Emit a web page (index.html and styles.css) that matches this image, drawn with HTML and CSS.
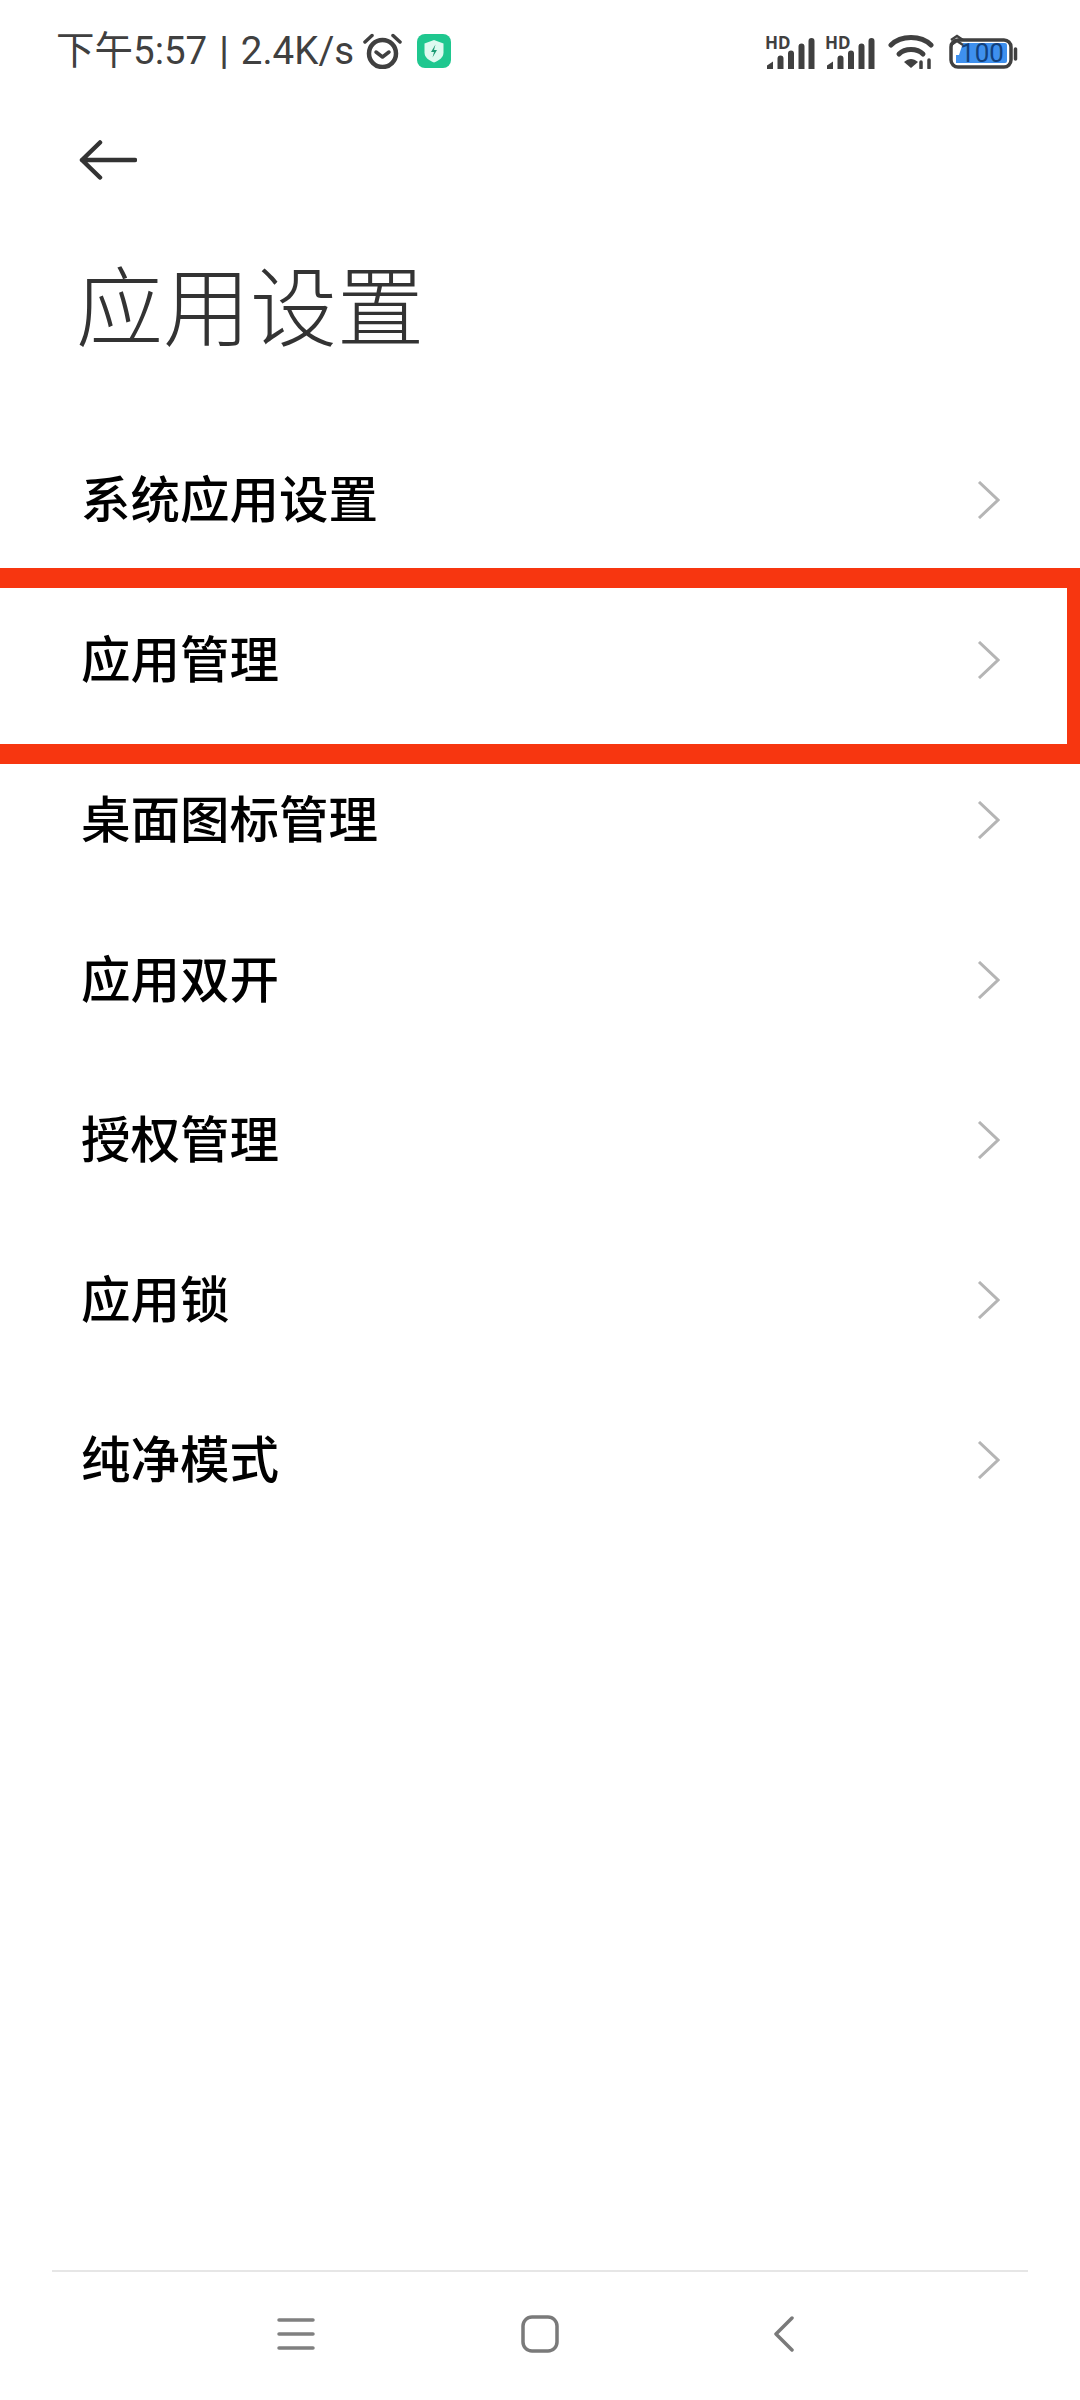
FILE: index.html
```html
<!DOCTYPE html>
<html lang="zh-CN">

<head>
    <meta charset="UTF-8">
    <meta name="viewport" content="width=device-width, initial-scale=1.0">
    <title>应用设置</title>
    <link rel="stylesheet" href="styles.css">
</head>

<body>
    <div class="page">
        <!-- Status bar -->
        <div class="statusbar">
            <span class="status-text">下午5:57<span class="status-sep">|</span>2.4K/s</span>
            <svg class="alarm" width="39" height="36" viewBox="0 0 39 36" fill="none" stroke="#404040">
                <circle cx="19.5" cy="20.5" r="13.5" stroke-width="4.500" />
                <path d="M13 19l6.500 5 6.500-5" stroke-width="3.500" stroke-linecap="round" stroke-linejoin="round" />
                <path d="M2 9l7-6.500M37 9l-7-6.500" stroke-width="3.500" stroke-linecap="round" />
            </svg>
            <svg class="shield" width="34" height="34" viewBox="0 0 34 34">
                <rect width="34" height="34" rx="8" fill="#1fc78f" />
                <path d="M17 6l9.500 3.500v9c0 5-4.500 8-9.500 10-5-2-9.500-5-9.500-10v-9z" fill="#dffaf0" />
                <path d="M18.500 10.500l-4.500 7.500h3l-1.500 5.500 4.500-7.500h-3z" fill="#1f9c75" />
            </svg>

            <div class="status-right">
                <svg class="signal" width="50" height="38" viewBox="0 0 50 38">
                    <text x="0" y="17" class="hd">HD</text>
                    <path d="M2 37v-3.500l6-4v7.500zM12.500 37v-10.500q0-3 3-3t3 3v10.500zM23 37v-15.500q0-3 3-3t3 3v15.500zM33.500 37v-22.500q0-3 3-3t3 3v22.500zM43.500 37v-28q0-3 3-3t3 3v28z" fill="#404040" />
                </svg>
                <svg class="signal" width="50" height="38" viewBox="0 0 50 38">
                    <text x="0" y="17" class="hd">HD</text>
                    <path d="M2 37v-3.500l6-4v7.500zM12.500 37v-10.500q0-3 3-3t3 3v10.500zM23 37v-15.500q0-3 3-3t3 3v15.500zM33.500 37v-22.500q0-3 3-3t3 3v22.500zM43.500 37v-28q0-3 3-3t3 3v28z" fill="#404040" />
                </svg>
                <svg class="wifi" width="46" height="36" viewBox="0 0 46 36" fill="none" stroke="#404040" stroke-width="5" stroke-linecap="round">
                    <path d="M3 12C13 2 33 2 43 12" />
                    <path d="M11 21C17 15 29 15 35 21" />
                    <path d="M16 29l7 6 7-6C25 25 21 25 16 29z" fill="#404040" stroke="none" />
                    <path d="M33 35v-6M41 35v-8" stroke-width="3.500" />
                </svg>
                <svg class="battery" width="69" height="36" viewBox="0 0 69 36">
                    <rect x="2" y="7" width="60" height="27" rx="7" fill="#fff" stroke="#404040" stroke-width="3.500" />
                    <path d="M7 22h3l4-12h42a2 2 0 0 1 2 2v16a2 2 0 0 1-2 2H7z" fill="#3e90ee" />
                    <path d="M2 7l6-4 6 4M2 12l6-4 6 4" fill="none" stroke="#404040" stroke-width="2.500" />
                    <path d="M66.500 16v10" stroke="#404040" stroke-width="3.500" stroke-linecap="round" />
                    <text x="33" y="29" text-anchor="middle" class="level">100</text>
                </svg>
            </div>
        </div>

        <!-- Header -->
        <div class="back-row">
            <svg width="58" height="40" viewBox="0 0 58 40" fill="none" stroke="#333" stroke-width="4.500" stroke-linecap="round" stroke-linejoin="round">
                <path d="M3 20h53M21 2.500L3 20l18 17.500" />
            </svg>
        </div>
        <h1 class="title">应用设置</h1>

        <!-- Settings list -->
        <div class="list">
            <div class="item">
                <span class="item-label">系统应用设置</span>
                <svg class="chevron" width="23" height="38" viewBox="0 0 23 38"><path d="M2 1l19 18L2 37" /></svg>
            </div>
            <div class="item">
                <span class="item-label">应用管理</span>
                <svg class="chevron" width="23" height="38" viewBox="0 0 23 38"><path d="M2 1l19 18L2 37" /></svg>
                <div class="highlight"></div>
            </div>
            <div class="item">
                <span class="item-label">桌面图标管理</span>
                <svg class="chevron" width="23" height="38" viewBox="0 0 23 38"><path d="M2 1l19 18L2 37" /></svg>
            </div>
            <div class="item">
                <span class="item-label">应用双开</span>
                <svg class="chevron" width="23" height="38" viewBox="0 0 23 38"><path d="M2 1l19 18L2 37" /></svg>
            </div>
            <div class="item">
                <span class="item-label">授权管理</span>
                <svg class="chevron" width="23" height="38" viewBox="0 0 23 38"><path d="M2 1l19 18L2 37" /></svg>
            </div>
            <div class="item">
                <span class="item-label">应用锁</span>
                <svg class="chevron" width="23" height="38" viewBox="0 0 23 38"><path d="M2 1l19 18L2 37" /></svg>
            </div>
            <div class="item">
                <span class="item-label">纯净模式</span>
                <svg class="chevron" width="23" height="38" viewBox="0 0 23 38"><path d="M2 1l19 18L2 37" /></svg>
            </div>
        </div>

        <!-- Navigation bar -->
        <div class="navbar">
            <svg width="38" height="32" viewBox="0 0 38 32" fill="none" stroke="#808080" stroke-width="3.500" stroke-linecap="round">
                <path d="M2 2h34M2 16h34M2 30h34" />
            </svg>
            <svg width="38" height="38" viewBox="0 0 38 38" fill="none" stroke="#7a7a7a" stroke-width="3.500">
                <rect x="2" y="2" width="34" height="34" rx="9" />
            </svg>
            <svg class="nav-back" width="22" height="36" viewBox="0 0 22 36" fill="none" stroke="#7a7a7a" stroke-width="3.500" stroke-linecap="round" stroke-linejoin="round">
                <path d="M19 2L3 18l16 16" />
            </svg>
        </div>
    </div>
</body>

</html>
```

FILE: styles.css
```css
* {
    box-sizing: border-box;
}

body {
    margin: 0;
    background-color: #fff;
    font-family: Roboto, "Noto Sans CJK SC", sans-serif;
    overflow: hidden;
}

.page {
    position: relative;
    display: flex;
    flex-direction: column;
    width: 1080px;
    height: 2400px;
    overflow: hidden;
}

.statusbar {
    display: flex;
    align-items: center;
    height: 102px;
    padding: 0 62px 0 56px;
}

.status-text {
    font-size: 38.5px;
    line-height: 40px;
    color: #404040;
    white-space: nowrap;
}

.status-sep {
    margin: 0 12px;
    font-weight: 500;
}

.alarm {
    margin-left: 9px;
}

.shield {
    margin-left: 15px;
}

.status-right {
    display: flex;
    align-items: center;
    margin-left: auto;
}

.signal {
    margin-left: 10px;
}

.wifi {
    margin-left: 13px;
}

.battery {
    margin-left: 15px;
}

.hd {
    font-family: "Noto Sans", sans-serif;
    font-size: 17px;
    font-weight: 700;
    fill: #404040;
}

.level {
    font-family: Roboto, sans-serif;
    font-size: 26px;
    fill: #12407c;
}

.back-row {
    display: flex;
    align-items: center;
    height: 116px;
    padding-left: 79px;
}

.title {
    margin: 0 0 18px;
    padding-left: 76px;
    height: 184px;
    font-size: 87px;
    font-weight: 300;
    line-height: 184px;
    color: #333;
}

.list {
    display: flex;
    flex-direction: column;
}

.item {
    position: relative;
    display: flex;
    align-items: center;
    justify-content: space-between;
    height: 160px;
    padding: 0 80px 0 81px;
    font-size: 49.5px;
    font-weight: 500;
    color: #000;
}

.item-label {
    padding-bottom: 7px;
}

.chevron {
    fill: none;
    stroke: #b5b5b5;
    stroke-width: 3;
}

/* red annotation box over the second row */
.highlight {
    position: absolute;
    left: -30px;
    right: -7px;
    top: -12px;
    bottom: -24px;
    border: 20px solid #f73610;
}

.navbar {
    display: flex;
    align-items: center;
    justify-content: space-between;
    margin: auto 52px 0;
    height: 130px;
    padding: 0 233px 4px 225px;
    border-top: 2px solid #e6e6e6;
}

.nav-back {
    margin-left: 8px;
}
```
